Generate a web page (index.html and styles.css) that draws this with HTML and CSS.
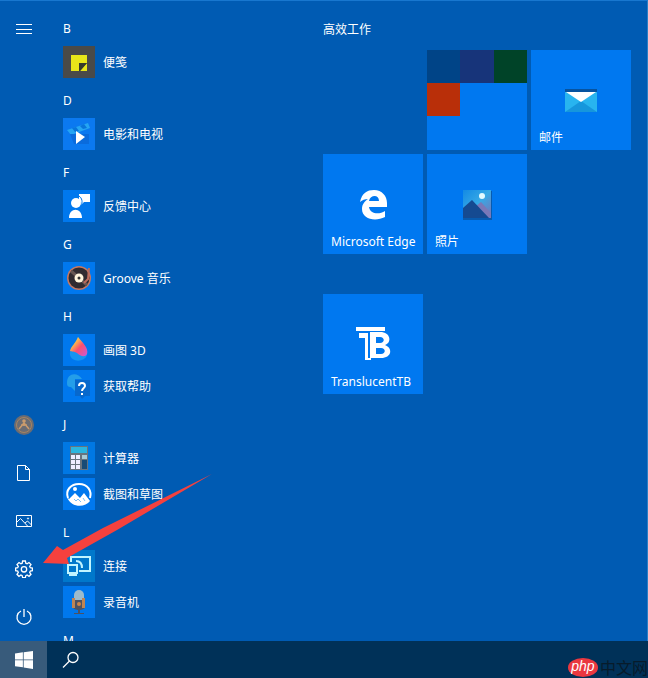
FILE: index.html
```html
<!DOCTYPE html>
<html lang="zh-CN">
<head>
<meta charset="utf-8">
<title>开始</title>
<link rel="stylesheet" href="styles.css">
</head>
<body>
<main class="start">
  <nav class="rail" aria-label="开始">
    <button class="rail-btn rail-menu" aria-label="菜单"><svg width="16" height="16" viewBox="0 0 16 16"><path d="M0 3.5h16M0 8.5h16M0 12.5h16"/></svg></button>
    <button class="rail-btn" aria-label="用户"><svg class="avatar" width="20" height="20" viewBox="0 0 20 20"><circle cx="10" cy="10" r="10" fill="#6b6c72"/><circle cx="10" cy="10" r="7.5" fill="none" stroke="#a8845f"/><circle cx="10" cy="6" r="1.8" fill="#c99b6d"/><path d="M5 14l5-6 5 6M7 10h6M10 8v3" fill="none" stroke="#c99b6d" stroke-width="1.5"/></svg></button>
    <button class="rail-btn" aria-label="文档"><svg width="16" height="18" viewBox="0 0 16 18"><path d="M1.5 1.5h8l4 4v11h-12zM9.5 1.5v4h4"/></svg></button>
    <button class="rail-btn" aria-label="图片"><svg width="16" height="16" viewBox="0 0 16 16"><path d="M.5 2.5h15v11H.5zM.5 9.500l4-4 7.500 8M9 10l2.500-2 4 4"/><circle cx="12" cy="5.500" r=".6"/></svg></button>
    <button class="rail-btn" aria-label="设置"><svg class="bold" width="18" height="18" viewBox="0 0 18 18"><path d="M7.600 1h2.800l.4 2.200 1.300.6 1.900-1.300 2 2-1.300 1.900.6 1.300 2.100.4v2.600l-2.100.4-.6 1.300 1.300 1.900-2 2-1.900-1.300-1.300.6-.4 2H7.600l-.4-2-1.300-.6L4 16.300l-2-2 1.300-1.900-.6-1.300L.6 10.700V8.100l2.100-.4.6-1.300L2 4.500l2-2 1.900 1.300 1.300-.6z"/><circle cx="9" cy="9.300" r="2.700"/></svg></button>
    <button class="rail-btn" aria-label="电源"><svg class="bold" width="18" height="18" viewBox="0 0 18 18"><path d="M6 3a7 7 0 1 0 6 0M9 1v8"/></svg></button>
  </nav>

  <section class="apps" aria-label="所有应用">
    <h2 class="letter">B</h2>
    <a class="app" href="#"><svg class="app-icon" viewBox="0 0 32 32"><path fill="#4a4a48" d="M0 0h32v32H0z"/><path fill="#e8e619" d="M8 9h16v8h-7v8H8z"/><path fill="#e8e619" d="M17 25h7v-8z"/><path fill="#353a2b" d="M16 17h8l-7 8h-1z"/></svg>便笺</a>
    <h2 class="letter">D</h2>
    <a class="app" href="#"><svg class="app-icon" viewBox="0 0 32 32"><path fill="#0b79f0" d="M0 0h32v32H0z"/><path fill="#25a5f3" d="M4 12L25 5l2 5-19 7z"/><path fill="#0875dc" d="M9 10l4-1 3 4-4 1zM17 8l4-2 3 4-4 1z"/><path fill="#0a6bdc" d="M7 16h19v10H11z"/><path fill="#fff" d="M13 13l9 6-9 7z"/></svg>电影和电视</a>
    <h2 class="letter">F</h2>
    <a class="app" href="#"><svg class="app-icon" viewBox="0 0 32 32"><path fill="#0078ee" d="M0 0h32v32H0z"/><g fill="#fff"><circle cx="13" cy="13" r="5"/><path d="M6 28c0-11 13-11 13 0zM16 4h11v8h-6l-3 3v-3h-2z"/></g><path d="M16 6c3 2 4 6 2 10" fill="none" stroke="#0078ee"/></svg>反馈中心</a>
    <h2 class="letter">G</h2>
    <a class="app" href="#"><svg class="app-icon" viewBox="0 0 32 32"><path fill="#0078ee" d="M0 0h32v32H0z"/><circle cx="16" cy="16" r="12" fill="#c57863"/><circle cx="16" cy="16" r="10.5" fill="#302b30"/><path d="M16 16L8 9M16 16l8 7" stroke="#665652" stroke-width="3"/><circle cx="16" cy="16" r="4.5" fill="#fff5dd"/><circle cx="16" cy="16" r="1.5" fill="#333"/><path d="M26 6l-1 11-4 4" fill="none" stroke="#ba6b5c" stroke-width="2"/></svg>Groove 音乐</a>
    <h2 class="letter">H</h2>
    <a class="app" href="#"><svg class="app-icon" viewBox="0 0 32 32"><defs><linearGradient id="drop" x2="1" y2="1"><stop stop-color="#ffd43b"/><stop offset=".3" stop-color="#fdb44b"/><stop offset=".55" stop-color="#fa4f70"/><stop offset="1" stop-color="#c65bdc"/></linearGradient></defs><path fill="#0078ee" d="M0 0h32v32H0z"/><path d="M15 3c4 5 11 12 9 18-2 7-15 8-17 0-1-5 5-11 8-18z" fill="#1594f0"/><path d="M15 3c4 5 11 11 9 17-2 4-7 2-10-1-3-2-5-1-7-2 1-5 6-8 8-14z" fill="url(#drop)"/></svg>画图 3D</a>
    <a class="app" href="#"><svg class="app-icon" viewBox="0 0 32 32"><path fill="#0078ee" d="M0 0h32v32H0z"/><path fill="#249ee9" d="M4 13C4 2 15 2 19 9h-7v12l-4-4c-3 0-4-1-4-4z"/><path fill="#0768cc" d="M12 10h15v16h-5l-3 3-2-3h-5z"/><path d="M16 16c0-4 6-4 6 0 0 2-3 2-3 5M19 23v2" fill="none" stroke="#fff" stroke-width="2"/></svg>获取帮助</a>
    <h2 class="letter">J</h2>
    <a class="app" href="#"><svg class="app-icon" viewBox="0 0 32 32"><path fill="#0078e4" d="M0 0h32v32H0z"/><path fill="#68747e" d="M7 4h18v24H7z"/><path fill="#2bb5de" d="M8 5h16v6H8z"/><path fill="#eef" d="M8 13h4v4H8zm5 0h4v4h-4zM8 18h4v4H8zm5 0h4v4h-4zM8 23h4v4H8zm5 0h4v4h-4z"/><path fill="#a9cbd5" d="M19 13h5v4h-5z"/><path fill="#174b76" d="M19 18h5v9h-5z"/></svg>计算器</a>
    <a class="app" href="#"><svg class="app-icon" viewBox="0 0 32 32"><path fill="#0078ee" d="M0 0h32v32H0z"/><path d="M5 20C2 12 8 6 16 6c9 0 13 7 11 14" fill="none" stroke="#fff" stroke-width="2"/><path fill="#fff" d="M4 19l2 2 6-6 5 5 4-5 6 8c-5 7-19 7-23-4z"/><path d="M11 21l2 2 2-2 3 3M20 20l2 3" fill="none" stroke="#7abff5"/><circle cx="12" cy="11" r="2" fill="#fff"/></svg>截图和草图</a>
    <h2 class="letter">L</h2>
    <a class="app" href="#"><svg class="app-icon" viewBox="0 0 32 32"><path fill="#0078cb" d="M0 0h32v32H0z"/><g fill="none" stroke="#c0f4ff" stroke-width="2"><path d="M8 12V7h19v14H16M5 15h9v8H5zM6 25h8"/><path d="M13 11c4 0 6 3 6 7M16 15"/></g></svg>连接</a>
    <a class="app" href="#"><svg class="app-icon" viewBox="0 0 32 32"><path fill="#0078ee" d="M0 0h32v32H0z"/><rect x="11" y="4" width="10" height="13" rx="5" fill="#9dbbcc"/><path fill="#4d5262" d="M10 14h12v7c0 4-12 4-12 0zM15 22h2v6h-2zM11 27h10v1H11z"/><path fill="#be8555" d="M9 12h3v10H9zm10 0h3v10h-3z"/><circle cx="16" cy="18" r="2" fill="#cf8548"/></svg>录音机</a>
    <h2 class="letter">M</h2>
  </section>

  <section class="tiles" aria-label="磁贴">
    <h2 class="tiles-title">高效工作</h2>
    <div class="group">
      <a class="tile folder" href="#" aria-label="Office"><span class="mini navy"></span><span class="mini indigo"></span><span class="mini green"></span><span class="mini red"></span></a>
      <a class="tile" href="#"><svg class="tile-icon" viewBox="0 0 40 40"><path fill="#07539f" d="M4 9h32v4H4z"/><path fill="#28b4ef" d="M4 12h32v20H4z"/><path fill="#1696dc" d="M4 32l16-11 16 11z"/><path fill="#fff" d="M5 12h30L20 22z"/></svg><span class="tile-name">邮件</span></a>
      <a class="tile first" href="#"><svg class="tile-icon" viewBox="0 0 40 40"><path fill="#fff" fill-rule="evenodd" d="M7 18C9 9 14 6 21 6c8 0 13 6 13 13v4H16c1 7 10 8 16 4v6c-10 5-23 2-23-8 0-5 3-8 6-10-3 0-6 1-8 3zm9-1h10c0-7-9-6-10 0z"/></svg><span class="tile-name">Microsoft Edge</span></a>
      <a class="tile" href="#"><svg class="tile-icon" viewBox="0 0 40 40"><defs><linearGradient id="sky" x2="1" y2="1"><stop stop-color="#138ae4"/><stop offset=".5" stop-color="#36a9e6"/><stop offset="1" stop-color="#7d70b4"/></linearGradient></defs><path fill="#075bb0" d="M6 7h29v29H6z"/><path fill="url(#sky)" d="M6 6h28v28H6z"/><path fill="#7978b8" d="M18 23l6-5 10 11v5H18z"/><path fill="#154a91" d="M6 24l9-8 17 18H6z"/><circle cx="25" cy="12" r="3" fill="#e3faff"/></svg><span class="tile-name">照片</span></a>
    </div>
    <div class="group">
      <a class="tile first" href="#"><svg class="tile-icon" viewBox="0 0 40 40"><path fill="#fff" d="M3 3h29v4H3zM6 9h9v25h3v2h-6V14H6z"/><path fill="#fff" fill-rule="evenodd" d="M17 8h10c11 0 12 11 5 13 8 3 7 13-4 13H17zm6 5v6h4c5 0 5-6 0-6zm0 11v6h5c5 0 5-6 0-6z"/></svg><span class="tile-name">TranslucentTB</span></a>
    </div>
  </section>
</main>

<footer class="taskbar">
  <button class="task-btn task-start" aria-label="开始"><svg width="18" height="18" viewBox="0 0 16 16"><path fill="#fff" d="M0 2.200L7 1.200v6.300H0zM7.700 1.100L16 0v7.500H7.700zM0 8.200h7v6.300l-7-1zM7.700 8.200H16V16l-8.300-1.300z"/></svg></button>
  <button class="task-btn" aria-label="搜索"><svg width="18" height="18" viewBox="0 0 18 18"><g fill="none" stroke="#fff" stroke-width="1.300"><circle cx="11" cy="6.500" r="5"/><path d="M7.500 10L1 16.500"/></g></svg></button>
  <div class="brand"><span class="brand-php">php</span><span class="brand-name">中文网</span></div>
</footer>

<svg class="pointer" width="172" height="100" viewBox="0 0 172 100" aria-hidden="true"><path fill="#f5413e" d="M169 1L60 55 20 77l-6-4L0 90l26 1-2-6 50-28z"/></svg>
</body>
</html>
```
FILE: styles.css
```css
* { box-sizing: border-box; }
body {
  margin: 0;
  height: 100vh;
  display: flex;
  flex-direction: column;
  overflow: hidden;
  position: relative;
  background: #005bb3;
  color: #fff;
  font: 12px/16px "Noto Sans", "Noto Sans CJK SC", sans-serif;
}
a { color: inherit; text-decoration: none; }
button { border: 0; padding: 0; background: none; color: inherit; }
h2 { margin: 0; font-size: 12px; font-weight: 400; }
.start {
  flex: 1;
  min-height: 0;
  display: flex;
  overflow: hidden;
  border-top: 1px solid #1877cf;
  border-right: 1px solid #2b7fc4;
}
.rail { width: 48px; display: flex; flex-direction: column; padding-top: 4px; }
.rail-btn { height: 48px; display: flex; align-items: center; justify-content: center; }
.rail-menu { margin-bottom: auto; }
.rail-btn svg { fill: none; stroke: #fff; stroke-width: 1; }
.rail-btn .bold { stroke-width: 1.3; }
.rail-btn .avatar { stroke: none; }
.apps { width: 260px; padding: 9px 0 0 15px; overflow: hidden; }
.letter { height: 36px; line-height: 38px; }
.app { height: 36px; display: flex; gap: 8px; line-height: 34px; }
.app-icon { width: 32px; height: 32px; flex: none; }
.tiles { flex: 1; padding: 9px 0 0 15px; }
.tiles-title { height: 40px; line-height: 40px; }
.group { display: grid; grid-template-columns: repeat(3, 100px); grid-auto-rows: 100px; gap: 4px; margin-bottom: 40px; }
.tile { display: flex; flex-direction: column; background: #0078f0; padding: 30px 8px 4px; justify-content: space-between; }
.first { grid-column: 1; }
.folder { grid-column: 2; padding: 0; display: grid; grid-template-columns: repeat(3, 1fr); grid-auto-rows: 33px; align-content: start; }
.navy { background: #004487; }
.indigo { background: #17347a; }
.green { background: #004328; }
.red { background: #b92f09; }
.tile-icon { width: 40px; height: 40px; align-self: center; }
.tile-name { white-space: nowrap; }
.taskbar { height: 37px; flex: none; display: flex; background: #003158; }
.task-btn { width: 47px; display: flex; align-items: center; justify-content: center; }
.task-start { background: #385b7b; }
.brand { margin-left: auto; display: flex; align-items: center; gap: 2px; padding-top: 16px; }
.brand-php { width: 30px; height: 19px; border-radius: 50%; background: #ea3840; font: italic 14px/17px "Liberation Sans", sans-serif; text-align: center; }
.brand-name { color: #071b2b; font-size: 16px; }
.pointer { position: absolute; left: 43px; top: 473px; }
```
